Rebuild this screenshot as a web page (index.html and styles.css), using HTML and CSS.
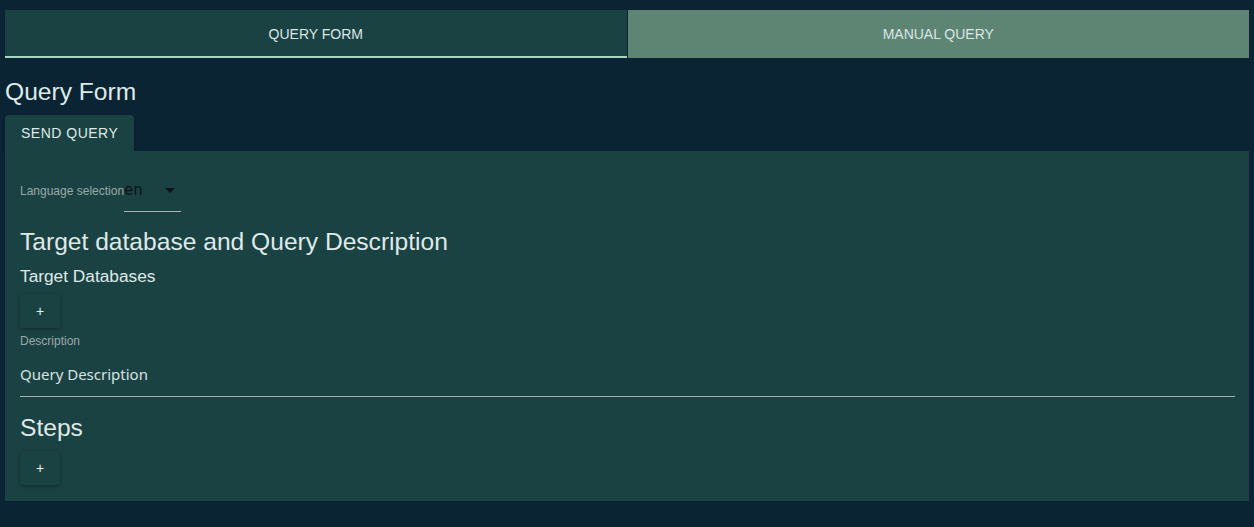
FILE: index.html
```html
<!DOCTYPE html>
<html>
<head>
<meta charset="utf-8">
<link rel="stylesheet" href="styles.css">
</head>
<body>
<div class="tabs">
  <div class="tab active">Query Form</div>
  <div class="tab other">Manual Query</div>
</div>
<h1 class="page-title">Query Form</h1>
<button class="send-btn">Send Query</button>
<div class="panel">
  <div class="lang-row">
    <span class="small-label">Language selection</span>
    <div class="select">
      <span class="select-value">en</span>
      <span class="caret"></span>
    </div>
  </div>
  <h2 class="section-title">Target database and Query Description</h2>
  <h3 class="sub-title">Target Databases</h3>
  <button class="add-btn">+</button>
  <div class="small-label desc-label">Description</div>
  <div class="textfield">Query Description</div>
  <h2 class="section-title steps">Steps</h2>
  <button class="add-btn">+</button>
</div>
</body>
</html>
```
FILE: styles.css
```css
html, body {
  margin: 0;
  background: #0a2433;
}
body {
  padding: 10px 5px 0 5px;
  font-family: "Liberation Sans", Arial, sans-serif;
  color: #dfe9e8;
}
.tabs {
  display: flex;
  height: 48px;
}
.tab {
  flex: 1;
  display: flex;
  align-items: center;
  justify-content: center;
  font-size: 14px;
  text-transform: uppercase;
  color: #d9e6e6;
  box-sizing: border-box;
}
.tab.active {
  background: #1b4243;
  border-bottom: 2px solid #a6d6c4;
  padding-top: 2px;
  margin-right: 1px;
}
.tab.other {
  background: #5e8574;
}
.page-title {
  font-size: 24.6px;
  font-weight: 400;
  line-height: 32px;
  margin: 18px 0 7px 0;
  color: #dfe9e8;
}
.send-btn {
  display: block;
  height: 36px;
  padding: 0 16px;
  border: none;
  border-radius: 4px 4px 0 0;
  background: #1b4243;
  color: #dfe9e8;
  font-family: "Liberation Sans", Arial, sans-serif;
  font-size: 14px;
  font-weight: 400;
  letter-spacing: 0.5px;
  text-transform: uppercase;
  box-shadow: 0 2px 3px rgba(0,0,0,0.25);
}
.panel {
  background: #1b4243;
  padding: 25px 14px 16px 15px;
}
.lang-row {
  display: flex;
  align-items: flex-start;
  height: 37px;
}
.small-label {
  font-size: 12px;
  color: #9aa9a8;
}
.lang-row .small-label {
  padding-top: 8px;
}
.select {
  width: 57px;
  height: 36px;
  border-bottom: 1px solid #a9b4b3;
  display: flex;
  align-items: flex-start;
  justify-content: space-between;
  box-sizing: border-box;
  padding-top: 4px;
}
.select-value {
  font-family: "DejaVu Sans", sans-serif;
  font-size: 15px;
  color: #0a1416;
  line-height: 20px;
}
.caret {
  width: 0;
  height: 0;
  border-left: 5px solid transparent;
  border-right: 5px solid transparent;
  border-top: 5px solid #0a1416;
  margin: 8px 6px 0 0;
}
.section-title {
  font-size: 24.6px;
  font-weight: 400;
  line-height: 32px;
  margin: 13px 0 0 0;
  color: #dfe9e8;
}
.sub-title {
  font-size: 17.3px;
  font-weight: 400;
  line-height: 24px;
  margin: 6px 0 6px 0;
  color: #dfe9e8;
}
.add-btn {
  display: block;
  width: 40px;
  height: 34px;
  border: none;
  border-radius: 3px;
  background: #1b4243;
  color: #e6eeee;
  font-family: "Liberation Sans", Arial, sans-serif;
  font-size: 14px;
  box-shadow: 0 1px 4px rgba(0,0,0,0.35);
  padding: 0;
}
.desc-label {
  margin-top: 6px;
  line-height: 14px;
}
.textfield {
  font-family: "Noto Sans", "Open Sans", sans-serif;
  font-size: 15px;
  color: #d6e2e1;
  height: 49px;
  line-height: 24px;
  padding-top: 14px;
  box-sizing: border-box;
  border-bottom: 1px solid #a9aeae;
  margin-top: 0;
}
.section-title.steps {
  margin-top: 15px;
  margin-bottom: 7px;
}
```
